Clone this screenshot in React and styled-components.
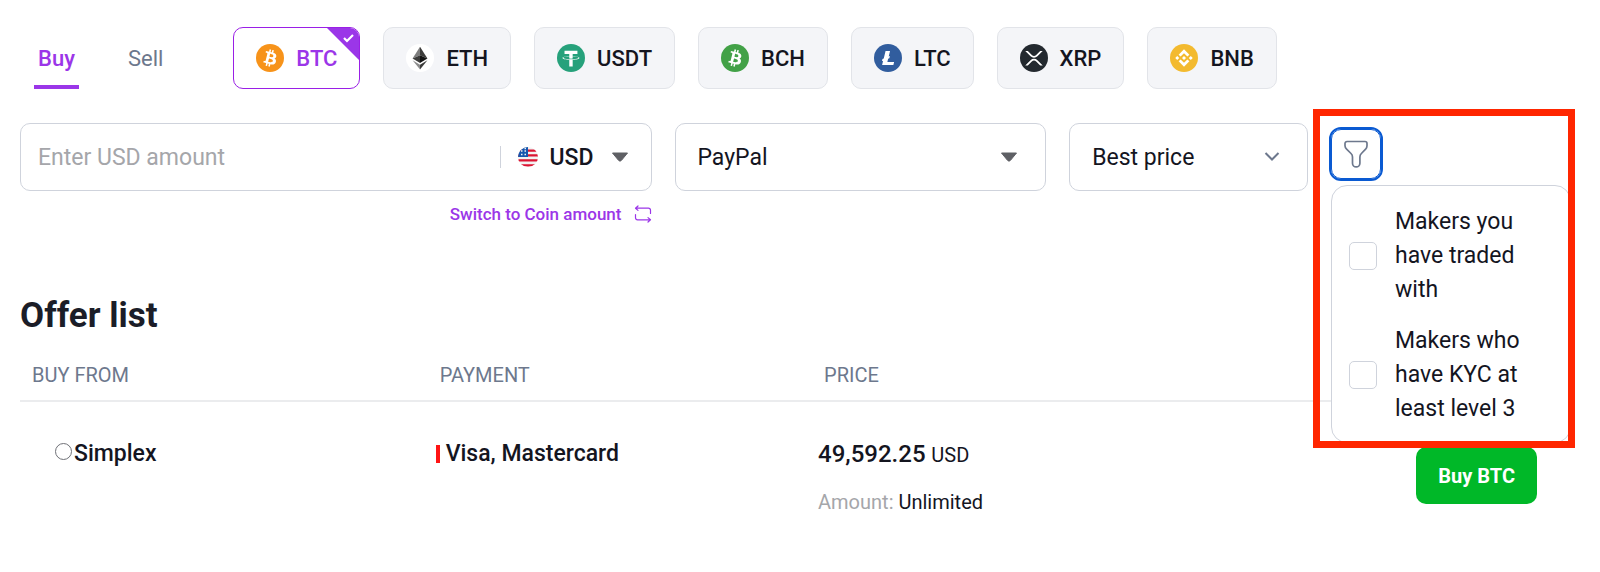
import { useState } from "react";
import styled, { createGlobalStyle, css } from "styled-components";

const GlobalStyle = createGlobalStyle`
  * {
    box-sizing: border-box;
  }
  body {
    margin: 0;
    background: #ffffff;
    color: #14151f;
    font-family: Roboto, "Liberation Sans", sans-serif;
    font-size: 23px;
    line-height: 34px;
  }
  button, input, select {
    font: inherit;
    color: inherit;
  }
`;

const purple = "#9b36e8";
const slate = "#6d788d";
const border = "#cfd3dc";

const Page = styled.main`
  padding: 27px 30px 40px 20px;
`;

const TopBar = styled.div`
  display: flex;
  align-items: stretch;
  gap: 66px;
  margin-bottom: 34px;
`;

const Tabs = styled.nav`
  display: flex;
  gap: 45px;
  padding-left: 14px;
`;

const Tab = styled.button`
  padding: 6px 4px 0;
  border: 0;
  border-bottom: 4px solid transparent;
  background: none;
  color: ${slate};
  font-size: 22px;
  cursor: pointer;
  ${({ $active }) =>
    $active &&
    css`
      color: ${purple};
      font-weight: 500;
      border-color: ${purple};
    `}
`;

const CoinList = styled.div`
  display: flex;
  flex-wrap: wrap;
  gap: 23px;
`;

const CoinButton = styled.button`
  position: relative;
  display: flex;
  align-items: center;
  gap: 12px;
  height: 62px;
  padding: 0 22px;
  overflow: hidden;
  border: 1px solid #e2e4e9;
  border-radius: 10px;
  background: #f4f5f8;
  font-size: 22px;
  font-weight: 500;
  cursor: pointer;
  ${({ $active }) =>
    $active &&
    css`
      border-color: #9a1fe6;
      background: #ffffff;
      color: ${purple};
    `}
`;

const CoinName = styled.span`
  padding-top: 2px;
`;

const Corner = styled.svg`
  position: absolute;
  top: 0;
  right: 0;
`;

const Filters = styled.div`
  display: grid;
  grid-template-columns: 633fr 371fr 239fr 239px;
  gap: 23px;
  align-items: start;
`;

const Field = styled.div`
  display: flex;
  align-items: center;
  height: 68px;
  border: 1px solid ${border};
  border-radius: 10px;
`;

const AmountInput = styled.input`
  flex: 1;
  min-width: 0;
  padding: 2px 17px 0;
  border: 0;
  outline: 0;
  background: none;
  &::placeholder {
    color: #a5a6aa;
    opacity: 1;
  }
`;

const Divider = styled.span`
  width: 1px;
  height: 22px;
  margin-right: 17px;
  background: ${border};
`;

const SelectWrap = styled.div`
  display: grid;
  flex: ${({ $grow }) => ($grow ? 1 : "none")};
  align-items: center;
  height: 100%;
  padding-right: ${({ $inset }) => $inset}px;

  > * {
    grid-area: 1 / 1;
  }
  > svg {
    justify-self: end;
    pointer-events: none;
  }
`;

const Select = styled.select`
  width: 100%;
  height: 100%;
  padding: 2px 36px 0 ${({ $start }) => $start}px;
  appearance: none;
  border: 0;
  outline: 0;
  background: none;
  font-weight: ${({ $strong }) => ($strong ? 500 : 400)};
`;

const SwitchRow = styled.div`
  display: flex;
  justify-content: flex-end;
  margin-top: 6px;
`;

const SwitchButton = styled.button`
  display: flex;
  align-items: center;
  gap: 13px;
  padding: 0;
  border: 0;
  background: none;
  color: ${purple};
  font-size: 17px;
  font-weight: 500;
  cursor: pointer;
`;

const FilterMenu = styled.div`
  position: relative;
  padding-top: 6px;
`;

const FilterButton = styled.button`
  display: grid;
  place-items: center;
  width: 50px;
  height: 50px;
  padding: 0;
  border: 1px solid #0a5ad2;
  border-radius: 10px;
  outline: 2px solid #0a5ad2;
  background: #ffffff;
  cursor: pointer;
`;

const Popup = styled.div`
  position: absolute;
  top: 62px;
  left: 0;
  display: grid;
  gap: 17px;
  width: 240px;
  padding: 19px 40px 16px 17px;
  border: 1px solid ${border};
  border-radius: 16px;
  background: #ffffff;
`;

const Highlight = styled.div`
  position: absolute;
  top: -14px;
  left: -18px;
  width: 262px;
  height: 339px;
  border: 7px solid #ff2600;
  pointer-events: none;
`;

const Option = styled.label`
  display: flex;
  align-items: center;
  gap: 18px;
`;

const Checkbox = styled.input`
  flex: none;
  width: 28px;
  height: 28px;
  margin: 0;
  appearance: none;
  border: 1px solid ${border};
  border-radius: 5px;
  background: #ffffff;
  &:checked {
    background: ${purple};
  }
`;

const Title = styled.h2`
  margin: 65px 0 19px;
  font-size: 35px;
  font-weight: 700;
  line-height: 40px;
  color: #1b1d28;
`;

const Table = styled.table`
  width: 100%;
  table-layout: fixed;
  border-collapse: collapse;
`;

const HeadCell = styled.th`
  width: ${({ $width }) => $width};
  padding: 3px 12px 8px;
  border-bottom: 2px solid #ebecee;
  color: ${slate};
  font-size: 20px;
  font-weight: 400;
  text-align: left;
`;

const Cell = styled.td`
  padding: ${({ $top = 35 }) => $top}px 0 0 ${({ $left = 0 }) => $left}px;
  vertical-align: top;
  font-weight: 500;
`;

const ActionCell = styled(Cell)`
  padding-right: 33px;
  text-align: right;
`;

const Seller = styled.div`
  display: flex;
  align-items: flex-start;
  gap: 2px;
`;

const Status = styled.span`
  width: 17px;
  height: 17px;
  margin-top: 6px;
  border: 1px solid #6f7177;
  border-radius: 50%;
`;

const Payment = styled.div`
  display: flex;
  align-items: center;
  gap: 6px;
  &::before {
    content: "";
    width: 4px;
    height: 18px;
    background: #ff1414;
  }
`;

const Price = styled.span`
  font-size: 24px;
`;

const Small = styled.span`
  font-size: 20px;
  font-weight: 400;
`;

const Amount = styled.div`
  margin-top: 13px;
  font-size: 20px;
  font-weight: 400;
  span {
    color: #a5a6aa;
  }
`;

const BuyButton = styled.button`
  height: 57px;
  padding: 0 22px;
  border: 0;
  border-radius: 10px;
  background: #00b828;
  color: #ffffff;
  font-size: 20px;
  font-weight: 700;
  cursor: pointer;
`;

const bitcoinPath =
  "M23.189 14.02c.314-2.096-1.283-3.223-3.465-3.975l.708-2.84-1.728-.43-.69 2.765c-.454-.114-.92-.22-1.385-.326l.695-2.783L15.596 6l-.708 2.839c-.376-.086-.746-.17-1.104-.26l.002-.009-2.384-.595-.46 1.846s1.283.294 1.256.312c.7.175.826.638.805 1.006l-.806 3.235c.048.012.11.03.18.057l-.183-.045-1.13 4.532c-.086.212-.303.531-.793.41.018.025-1.256-.313-1.256-.313l-.858 1.978 2.25.561c.418.105.828.215 1.231.318l-.715 2.872 1.727.43.708-2.84c.472.127.93.245 1.378.357l-.706 2.828 1.728.43.715-2.866c2.948.558 5.164.333 6.097-2.333.752-2.146-.037-3.385-1.588-4.192 1.13-.26 1.98-1.003 2.207-2.538zm-3.95 5.538c-.533 2.147-4.148.986-5.32.695l.95-3.805c1.172.293 4.929.872 4.37 3.11zm.535-5.569c-.487 1.953-3.495.96-4.47.717l.86-3.45c.975.243 4.118.696 3.61 2.733z";

const coins = [
  { name: "BTC", color: "#f7931a", path: bitcoinPath },
  { name: "ETH", color: "#ffffff" },
  {
    name: "USDT",
    color: "#26a17b",
    path: "M17.922 17.383v-.002c-.11.008-.677.042-1.942.042-1.01 0-1.721-.03-1.971-.042v.003c-3.888-.171-6.79-.848-6.79-1.658 0-.809 2.902-1.486 6.79-1.66v2.644c.254.018.982.061 1.988.061 1.207 0 1.812-.05 1.925-.06v-2.643c3.88.173 6.775.85 6.775 1.658 0 .81-2.895 1.485-6.775 1.657m0-3.59v-2.366h5.414V7.819H8.595v3.608h5.414v2.365c-4.4.202-7.709 1.074-7.709 2.118 0 1.044 3.309 1.915 7.709 2.118v7.582h3.913v-7.584c4.393-.202 7.694-1.073 7.694-2.116 0-1.043-3.301-1.914-7.694-2.117",
  },
  { name: "BCH", color: "#42a147", path: bitcoinPath },
  {
    name: "LTC",
    color: "#315d9e",
    path: "M10.427 19.214L9 19.768l.688-2.759 1.444-.58L13.213 8h5.129l-1.519 6.196 1.41-.571-.68 2.75-1.427.571-.848 3.483H23L22.127 24H9.252z",
  },
  {
    name: "XRP",
    color: "#23292f",
    path: "M23.07 8h2.89l-6.015 5.957a5.621 5.621 0 01-7.89 0L6.035 8H8.93l4.57 4.523a3.556 3.556 0 004.996 0L23.07 8zM8.895 24.563H6l6.055-5.993a5.621 5.621 0 017.89 0L26 24.562h-2.895L18.5 20a3.556 3.556 0 00-4.996 0l-4.61 4.563z",
  },
  {
    name: "BNB",
    color: "#f3ba2f",
    path: "M12.116 14.404L16 10.52l3.886 3.886 2.26-2.26L16 6l-6.144 6.144 2.26 2.26zM6 16l2.26-2.26L10.52 16l-2.26 2.26L6 16zm6.116 1.596L16 21.48l3.886-3.886 2.26 2.259L16 26l-6.144-6.144-.003-.003 2.263-2.257zM21.48 16l2.26-2.26L26 16l-2.26 2.26L21.48 16zm-3.188-.002h.002V16L16 18.294l-2.291-2.29-.004-.004.004-.003.401-.402.195-.195L16 13.706l2.293 2.293z",
  },
];

const CoinIcon = ({ coin }) => (
  <svg width="28" height="28" viewBox="0 0 32 32" aria-hidden="true">
    <circle cx="16" cy="16" r="16" fill={coin.color} />
    {coin.path ? (
      <path d={coin.path} fill="#ffffff" />
    ) : (
      <>
        <path d="M16 3L7.5 16.5 16 12.8z" fill="#7d7d7d" />
        <path d="M16 3l8.5 13.5L16 12.8z" fill="#3c3c3b" />
        <path d="M7.5 16.5L16 12.8v8.9z" fill="#3c3c3b" />
        <path d="M24.5 16.5L16 12.8v8.9z" fill="#141414" />
        <path d="M7.5 18.6L16 23.7V29z" fill="#8c8c8c" />
        <path d="M24.5 18.6L16 23.7V29z" fill="#3c3c3b" />
      </>
    )}
  </svg>
);

const Caret = () => (
  <svg width="18" height="10" viewBox="0 0 18 10" aria-hidden="true">
    <path
      d="M1.5 1h15L10.5 8.3a2 2 0 01-3 0z"
      fill="#5f6065"
      stroke="#5f6065"
      strokeLinejoin="round"
    />
  </svg>
);

const Chevron = () => (
  <svg width="16" height="12" viewBox="0 0 16 12" aria-hidden="true">
    <path d="M1.5 2L8 8.5 14.5 2" fill="none" stroke={slate} strokeWidth="2" />
  </svg>
);

const Flag = () => (
  <svg width="20" height="20" viewBox="0 0 20 20" aria-hidden="true">
    <clipPath id="flag-round">
      <circle cx="10" cy="10" r="10" />
    </clipPath>
    <g clipPath="url(#flag-round)">
      <rect width="20" height="20" fill="#f2f2f2" />
      <path
        d="M0 3.600h20M0 8.400h20M0 13.400h20M0 18.400h20"
        stroke="#dc1432"
        strokeWidth="2.4"
      />
      <rect width="10" height="10" fill="#1656ad" />
      <path
        d="M3 4h1.5M6.5 4H8M3 7.5h1.5M6.5 7.5H8M6.5 1.5H8"
        stroke="#f2f2f2"
        strokeWidth="1.3"
      />
    </g>
  </svg>
);

const SwitchIcon = () => (
  <svg
    width="18"
    height="18"
    viewBox="0 0 18 18"
    fill="none"
    stroke={purple}
    strokeWidth="1.2"
    strokeLinecap="round"
    strokeLinejoin="round"
    aria-hidden="true"
  >
    <path d="M4 1L1.5 3.2 4 5.4M1.5 3.2h13a2 2 0 012 2v3.3M14 12.6l2.5 2.2L14 17M16.5 14.8h-13a2 2 0 01-2-2V9.5" />
  </svg>
);

const FunnelIcon = () => (
  <svg
    width="26"
    height="28"
    viewBox="0 0 26 28"
    fill="none"
    stroke={slate}
    strokeWidth="1.7"
    aria-hidden="true"
  >
    <path d="M4 1.5h18a2 2 0 012 2v2.200c0 1.300-.5 2.500-1.400 3.500l-4.200 4.300a5 5 0 00-1.500 3.500v6.200a3.700 3.700 0 01-7.400 0V17A5 5 0 008 13.500L3.600 9.200A5 5 0 012 5.700V3.500a2 2 0 012-2z" />
  </svg>
);

const App = () => {
  const [side, setSide] = useState("Buy");
  const [coin, setCoin] = useState("BTC");

  return (
    <>
      <GlobalStyle />
      <Page>
        <TopBar>
          <Tabs>
            {["Buy", "Sell"].map((item) => (
              <Tab
                key={item}
                $active={item === side}
                onClick={() => setSide(item)}
              >
                {item}
              </Tab>
            ))}
          </Tabs>
          <CoinList>
            {coins.map((item) => (
              <CoinButton
                key={item.name}
                $active={item.name === coin}
                onClick={() => setCoin(item.name)}
              >
                <CoinIcon coin={item} />
                <CoinName>{item.name}</CoinName>
                {item.name === coin && (
                  <Corner width="32" height="32" viewBox="0 0 32 32">
                    <path d="M0 0h32v32z" fill={purple} />
                    <path
                      d="M17 10l3 3 6-6"
                      fill="none"
                      stroke="#ffffff"
                      strokeWidth="2.2"
                    />
                  </Corner>
                )}
              </CoinButton>
            ))}
          </CoinList>
        </TopBar>

        <Filters>
          <div>
            <Field>
              <AmountInput
                aria-label="Enter USD amount"
                placeholder="Enter USD amount"
              />
              <Divider />
              <Flag />
              <SelectWrap $inset={22}>
                <Select aria-label="Currency" $start={11} $strong>
                  <option>USD</option>
                </Select>
                <Caret />
              </SelectWrap>
            </Field>
            <SwitchRow>
              <SwitchButton>
                Switch to Coin amount
                <SwitchIcon />
              </SwitchButton>
            </SwitchRow>
          </div>
          <Field>
            <SelectWrap $grow $inset={27}>
              <Select aria-label="Payment method" $start={21}>
                <option>PayPal</option>
              </Select>
              <Caret />
            </SelectWrap>
          </Field>
          <Field>
            <SelectWrap $grow $inset={27}>
              <Select aria-label="Sort by" $start={22}>
                <option>Best price</option>
              </Select>
              <Chevron />
            </SelectWrap>
          </Field>
          <FilterMenu>
            <FilterButton aria-label="Filter makers">
              <FunnelIcon />
            </FilterButton>
            <Popup>
              <Option>
                <Checkbox type="checkbox" />
                Makers you have traded with
              </Option>
              <Option>
                <Checkbox type="checkbox" />
                Makers who have KYC at least level 3
              </Option>
            </Popup>
            <Highlight />
          </FilterMenu>
        </Filters>

        <Title>Offer list</Title>
        <Table>
          <thead>
            <tr>
              <HeadCell $width="26.3%">BUY FROM</HeadCell>
              <HeadCell $width="24.8%">PAYMENT</HeadCell>
              <HeadCell>PRICE</HeadCell>
              <HeadCell aria-label="Action" />
            </tr>
          </thead>
          <tbody>
            <tr>
              <Cell $left={35}>
                <Seller>
                  <Status />
                  Simplex
                </Seller>
              </Cell>
              <Cell $left={8}>
                <Payment>Visa, Mastercard</Payment>
              </Cell>
              <Cell $left={6}>
                <Price>49,592.25</Price> <Small>USD</Small>
                <Amount>
                  <span>Amount:</span> Unlimited
                </Amount>
              </Cell>
              <ActionCell $top={45}>
                <BuyButton>Buy BTC</BuyButton>
              </ActionCell>
            </tr>
          </tbody>
        </Table>
      </Page>
    </>
  );
};

export default App;
